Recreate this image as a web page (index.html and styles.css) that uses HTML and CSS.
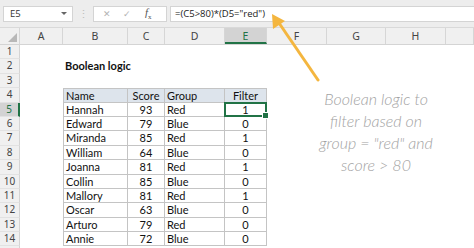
FILE: index.html
```html
<!DOCTYPE html>
<html lang="en">
<head>
    <meta charset="UTF-8">
    <title>Boolean logic</title>
    <link rel="stylesheet" href="styles.css">
</head>
<body>
    <div class="app">
        <div class="fbar">
            <div class="namebox"><span>E5</span><span class="caret"></span></div>
            <div class="grip">&#8942;</div>
            <div class="fbtns">
                <span class="btn-x">&#10005;</span>
                <span class="btn-ok">&#10003;</span>
                <span class="btn-fx"><i>f</i><sub>x</sub></span>
            </div>
            <div class="finput">=(C5&gt;80)*(D5="red")</div>
        </div>

        <div class="row colhead">
            <div class="corner"><span class="tri"></span></div>
            <div>A</div><div>B</div><div>C</div><div>D</div>
            <div class="on">E</div>
            <div>F</div><div>G</div><div>H</div><div></div>
        </div>

        <div class="row"><div class="rh">1</div></div>
        <div class="row"><div class="rh">2</div><div></div><div class="title">Boolean logic</div></div>
        <div class="row"><div class="rh">3</div></div>
        <div class="row thead">
            <div class="rh">4</div><div></div>
            <div class="t first">Name</div><div class="t num">Score</div><div class="t">Group</div><div class="t num">Filter</div>
        </div>
        <div class="row">
            <div class="rh on">5</div><div></div>
            <div class="t first">Hannah</div><div class="t num">93</div><div class="t">Red</div><div class="t num sel">1</div>
        </div>
        <div class="row">
            <div class="rh">6</div><div></div>
            <div class="t first">Edward</div><div class="t num">79</div><div class="t">Blue</div><div class="t num">0</div>
        </div>
        <div class="row">
            <div class="rh">7</div><div></div>
            <div class="t first">Miranda</div><div class="t num">85</div><div class="t">Red</div><div class="t num">1</div>
        </div>
        <div class="row">
            <div class="rh">8</div><div></div>
            <div class="t first">William</div><div class="t num">64</div><div class="t">Blue</div><div class="t num">0</div>
        </div>
        <div class="row">
            <div class="rh">9</div><div></div>
            <div class="t first">Joanna</div><div class="t num">81</div><div class="t">Red</div><div class="t num">1</div>
        </div>
        <div class="row">
            <div class="rh">10</div><div></div>
            <div class="t first">Collin</div><div class="t num">85</div><div class="t">Blue</div><div class="t num">0</div>
        </div>
        <div class="row">
            <div class="rh">11</div><div></div>
            <div class="t first">Mallory</div><div class="t num">81</div><div class="t">Red</div><div class="t num">1</div>
        </div>
        <div class="row">
            <div class="rh">12</div><div></div>
            <div class="t first">Oscar</div><div class="t num">63</div><div class="t">Blue</div><div class="t num">0</div>
        </div>
        <div class="row">
            <div class="rh">13</div><div></div>
            <div class="t first">Arturo</div><div class="t num">79</div><div class="t">Red</div><div class="t num">0</div>
        </div>
        <div class="row">
            <div class="rh">14</div><div></div>
            <div class="t first">Annie</div><div class="t num">72</div><div class="t">Blue</div><div class="t num">0</div>
        </div>
        <div class="row"><div class="rh"></div></div>

        <!-- callout over the sheet -->
        <div class="note">Boolean logic to<br>filter based on<br>group = "red" and<br>score &gt; 80</div>
        <svg class="arrow" width="474" height="248" viewBox="0 0 474 248">
            <line x1="318" y1="80" x2="279" y2="23" stroke="#f4b63f" stroke-width="3" stroke-linecap="round"/>
            <polygon points="272,14 273,29 285,21" fill="#f4b63f"/>
        </svg>
    </div>
</body>
</html>
```

FILE: styles.css
```css
body {
    margin: 0;
    background: #fff;
    font-family: "Lato", "Open Sans", sans-serif;
}
.app {
    position: relative;
    width: 474px;
    height: 248px;
    overflow: hidden;
}

/* formula bar */
.fbar {
    display: flex;
    align-items: center;
    height: 28px;
    padding: 0 0 0 3px;
    background: #ededed;
    box-sizing: border-box;
    border-bottom: 1px solid #d9d9d9;
}
.namebox {
    display: flex;
    align-items: center;
    justify-content: space-between;
    width: 70px;
    height: 16px;
    padding: 0 5px 0 6px;
    box-sizing: border-box;
    background: #fff;
    border: 1px solid #d4d4d4;
    font-family: "Open Sans", sans-serif;
    font-size: 9.5px;
    color: #333;
}
.caret {
    width: 0;
    height: 0;
    border-left: 3px solid transparent;
    border-right: 3px solid transparent;
    border-top: 3px solid #666;
}
.grip {
    width: 20px;
    text-align: center;
    color: #bdbdbd;
    font-size: 11px;
}
.fbtns {
    display: flex;
    align-items: center;
    width: 74px;
    height: 16px;
    box-sizing: border-box;
    background: #fff;
    border: 1px solid #d4d4d4;
    color: #b3b3b3;
    font-size: 9px;
}
.btn-x { margin-left: 9px; }
.btn-ok { margin-left: 12px; }
.btn-fx {
    margin-left: 14px;
    color: #555;
    font-family: "Liberation Serif", serif;
    font-size: 11px;
}
.btn-fx sub { font-size: 7px; }
.finput {
    flex: 1;
    height: 16px;
    margin-left: 3px;
    padding-left: 4px;
    box-sizing: border-box;
    background: #fff;
    border: 1px solid #d4d4d4;
    border-right: 0;
    font-family: "Open Sans", sans-serif;
    font-size: 9.5px;
    line-height: 14px;
    color: #222;
}

/* grid */
.row {
    display: grid;
    grid-template-columns: 20px 43px 65px 37px 60px 42px 60px 59px 60px 1fr;
    height: 14.4px;
    font-size: 11px;
    line-height: 13.4px;
    color: #111;
}
.row > div {
    box-sizing: border-box;
    white-space: nowrap;
    overflow: hidden;
}
.colhead {
    height: 17px;
    background: #f0f0f0;
    border-bottom: 1px solid #d4d4d4;
    box-sizing: border-box;
    font-family: "Noto Sans", sans-serif;
    font-size: 10.5px;
    line-height: 16px;
    color: #444;
}
.colhead > div {
    text-align: center;
    border-right: 1px solid #d6d6d6;
}
.colhead .on {
    background: #d3d3d3;
    color: #217346;
    border-bottom: 2px solid #217346;
}
.corner {
    position: relative;
}
.tri {
    position: absolute;
    right: 2px;
    bottom: 2px;
    width: 0;
    height: 0;
    border-left: 9px solid transparent;
    border-bottom: 9px solid #b8b8b8;
}
.rh {
    background: #f0f0f0;
    border-right: 1px solid #d4d4d4;
    border-bottom: 1px solid #e2e2e2;
    text-align: center;
    font-family: "Noto Sans", sans-serif;
    font-size: 10px;
    color: #444;
}
.rh.on {
    background: #d3d3d3;
    color: #217346;
    border-right: 2px solid #217346;
}
.row > .title {
    grid-column: span 3;
    padding-left: 2px;
    font-weight: bold;
    overflow: visible;
}
.t {
    padding-left: 2px;
    border-right: 1px solid #c4c4c4;
    border-bottom: 1px solid #c4c4c4;
}
.t.first {
    border-left: 1px solid #c4c4c4;
}
.t.num {
    text-align: center;
    padding-left: 0;
}
.thead .t {
    background: #dde4ec;
    border-top: 1px solid #c4c4c4;
}
.row > .sel {
    position: relative;
    overflow: visible;
}
.sel::after {
    content: "";
    position: absolute;
    left: -1px;
    top: -1px;
    right: -1px;
    bottom: -1px;
    border: 2px solid #217346;
}
.sel::before {
    content: "";
    position: absolute;
    right: -3px;
    bottom: -3px;
    width: 5px;
    height: 5px;
    background: #217346;
    border: 1px solid #fff;
    z-index: 1;
}

/* callout */
.note {
    position: absolute;
    left: 298px;
    top: 88px;
    width: 156px;
    text-align: center;
    font-family: "Lato", sans-serif;
    font-style: italic;
    font-weight: 300;
    font-size: 16px;
    line-height: 22px;
    color: #a3a3a3;
}
.arrow {
    position: absolute;
    left: 0;
    top: 0;
    pointer-events: none;
}
```
